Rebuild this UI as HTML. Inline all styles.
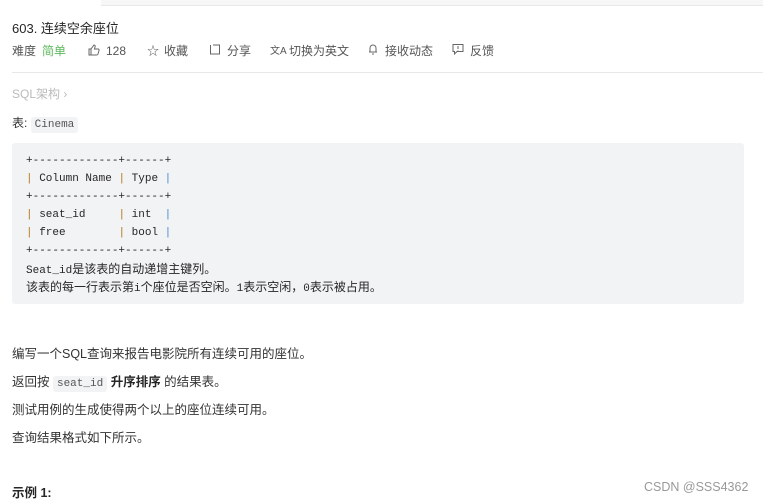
<!DOCTYPE html>
<html><head><meta charset="utf-8"><style>
body{margin:0;width:763px;height:503px;overflow:hidden;background:#fff;font-family:"Liberation Sans","Noto Sans CJK SC",sans-serif;color:#262626;position:relative}
.a{position:absolute;white-space:nowrap}
.topbar{position:absolute;left:101px;top:0;width:662px;height:5px;background:#f7f7f7;border-bottom:1px solid #e8e8e8}
.meta{top:43px;left:12px;font-size:12px;color:#555;line-height:16px}
.meta span{position:absolute;white-space:nowrap}
.code{position:absolute;left:12px;top:143px;width:732px;height:161px;background:#f2f3f5;border-radius:3px}
.code .l{position:absolute;left:14px;height:18px;line-height:18px;white-space:pre;font-family:"Liberation Mono",monospace;font-size:11px;color:#262626;overflow:visible}
.o{color:#b6761a}.b{color:#4a8ad0}
.cj{font-family:"Liberation Sans","Noto Sans CJK SC",sans-serif;font-size:12px;line-height:18px}
.t{font-size:12.5px;left:12px;color:#333}
code{font-family:"Liberation Mono",monospace;font-size:11px;background:#f2f3f5;padding:2px 4px;border-radius:3px;color:#555}
</style></head><body>
<div class="topbar"></div>
<div class="a" style="left:12px;top:18px;font-size:13px;color:#262626">603. 连续空余座位</div>
<div class="a meta" style="width:600px;height:16px">
<span style="left:0">难度</span><span style="left:30px;color:#5cb85c">简单</span>
<span style="left:76px"><svg width="12" height="12" viewBox="0 0 12 12" style="vertical-align:-1px"><path d="M1 5h2v6H1zM3 5l3-4c1 0 1.5 1 1 2L6.5 5H10c1 0 1.3.8 1 1.5L10 10c-.2.6-.7 1-1.3 1H3" fill="none" stroke="#666"/></svg></span><span style="left:94px">128</span>
<span style="left:135px">☆</span><span style="left:152px">收藏</span>
<span style="left:197px"><svg width="12" height="12" viewBox="0 0 12 12"><path d="M1.5 2v9h9V4M4 2h6.5v6" fill="none" stroke="#666"/></svg></span><span style="left:215px">分享</span>
<span style="left:258px;font-size:10px;top:1px">文A</span><span style="left:277px">切换为英文</span>
<span style="left:356px"><svg width="10" height="12" viewBox="0 0 10 12"><path d="M2 9V5a3 3 0 016 0v4H1h8M4 11h2" fill="none" stroke="#666"/></svg></span><span style="left:373px">接收动态</span>
<span style="left:440px"><svg width="12" height="12" viewBox="0 0 12 12"><path d="M1 1.5h10v7H5L2.5 11V8.5H1z M6 3v3M6 7v.5" fill="none" stroke="#666"/></svg></span><span style="left:458px">反馈</span>
</div>
<div style="position:absolute;left:12px;top:72px;width:751px;height:1px;background:#e8e8e8"></div>
<div class="a" style="left:12px;top:85px;font-size:12px;color:#bbb">SQL架构 ›</div>
<div class="a" style="left:12px;top:114px;font-size:12px;color:#333">表: <code style="font-size:11px">Cinema</code></div>
<div class="code">
<div class="l" style="top:9px">+-------------+------+</div>
<div class="l" style="top:27px"><span class="o">|</span> Column Name <span class="o">|</span> Type <span class="b">|</span></div>
<div class="l" style="top:45px">+-------------+------+</div>
<div class="l" style="top:63px"><span class="o">|</span> seat_id     <span class="o">|</span> int  <span class="b">|</span></div>
<div class="l" style="top:81px"><span class="o">|</span> free        <span class="o">|</span> bool <span class="b">|</span></div>
<div class="l" style="top:99px">+-------------+------+</div>
<div class="l" style="top:117px">Seat_id<span class="cj">是该表的自动递增主键列。</span></div>
<div class="l" style="top:135px"><span class="cj">该表的每一行表示第</span>i<span class="cj">个座位是否空闲。</span>1<span class="cj">表示空闲，</span>0<span class="cj">表示被占用。</span></div>
</div>
<div class="a t" style="top:343px">编写一个SQL查询来报告电影院所有连续可用的座位。</div>
<div class="a t" style="top:371px">返回按 <code>seat_id</code> <b style="color:#262626">升序排序</b> 的结果表。</div>
<div class="a t" style="top:399px">测试用例的生成使得两个以上的座位连续可用。</div>
<div class="a t" style="top:427px">查询结果格式如下所示。</div>
<div class="a t" style="top:482px;font-weight:bold;color:#262626">示例 1:</div>
<div class="a" style="left:644px;top:480px;font-size:12.5px;color:#999">CSDN @SSS4362</div>
</body></html>
